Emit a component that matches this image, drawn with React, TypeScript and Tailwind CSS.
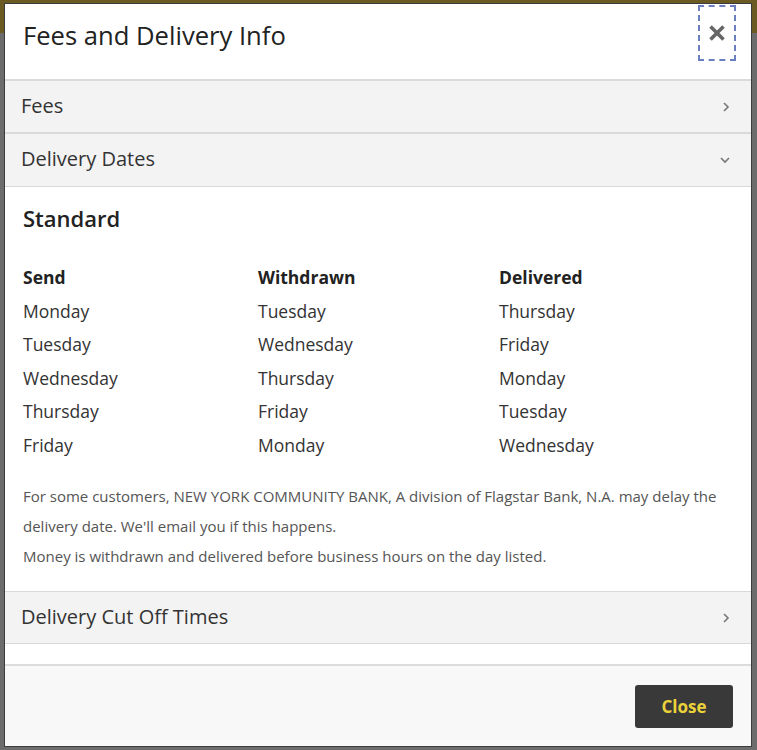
import React from 'react';

const rows = [
  ['Monday', 'Tuesday', 'Thursday'],
  ['Tuesday', 'Wednesday', 'Friday'],
  ['Wednesday', 'Thursday', 'Monday'],
  ['Thursday', 'Friday', 'Tuesday'],
  ['Friday', 'Monday', 'Wednesday'],
];

const ChevronRight = () => (
  <svg width="10" height="12" viewBox="0 0 10 12" className="text-[#777]">
    <polyline points="3,2 7,6 3,10" fill="none" stroke="currentColor" strokeWidth="1.6" />
  </svg>
);

const ChevronDown = () => (
  <svg width="12" height="10" viewBox="0 0 12 10" className="text-[#777]">
    <polyline points="2,3 6,7 10,3" fill="none" stroke="currentColor" strokeWidth="1.6" />
  </svg>
);

const AccordionHeader: React.FC<{ label: string; open?: boolean; className?: string }> = ({ label, open, className }) => (
  <div className={`flex items-center justify-between bg-[#f3f3f3] border-[#d9d9d9] pl-[16px] pr-[20px] ${className ?? ''}`}>
    <span className="mb-[2px] text-[20px] text-[#333]">{label}</span>
    {open ? <ChevronDown /> : <ChevronRight />}
  </div>
);

export default function App() {
  return (
    <div className="relative h-[750px] w-[757px] overflow-hidden bg-[#6c6c6c]" style={{ fontFamily: '"Open Sans", "Liberation Sans", sans-serif' }}>
      {/* page behind the overlay */}
      <div className="absolute left-0 right-0 top-0 h-[33px] bg-[#6b5a21]" />

      <div className="relative ml-[4px] mt-[3px] flex h-[744px] w-[748px] flex-col border border-[#3c3c3c] bg-white">
        {/* HEADER */}
        <div className="flex h-[77px] shrink-0 items-start justify-between border-b-2 border-[#dadada]">
          <h2 className="ml-[18px] mt-[14px] text-[25.6px] leading-[36px] text-[#222]">Fees and Delivery Info</h2>
          <button className="mr-[15px] mt-[1px] flex h-[56px] w-[38px] items-center justify-center border-2 border-dashed border-[#6a7fbf]">
            <svg width="18" height="18" viewBox="0 0 18 18">
              <path d="M2.5 2.5 L15.5 15.5 M15.5 2.5 L2.5 15.5" stroke="#666" strokeWidth="3.6" strokeLinecap="butt" />
            </svg>
          </button>
        </div>

        <AccordionHeader label="Fees" className="h-[53px] border-b-2" />
        <AccordionHeader label="Delivery Dates" open className="h-[53px] border-b" />

        {/* DELIVERY DATES BODY */}
        <div className="px-[18px] pt-[15px]">
          <h3 className="text-[22px] font-semibold leading-[32px] text-[#222]">Standard</h3>
          <div className="mt-[27px] grid grid-cols-[235px_241px_1fr] text-[17.5px] leading-[33.5px] text-[#333]">
            <div className="font-bold text-[#222]">Send</div>
            <div className="font-bold text-[#222]">Withdrawn</div>
            <div className="font-bold text-[#222]">Delivered</div>
            {rows.map((r, i) => (
              <React.Fragment key={i}>
                <div>{r[0]}</div>
                <div>{r[1]}</div>
                <div>{r[2]}</div>
              </React.Fragment>
            ))}
          </div>
          <div className="mt-[19px] pb-[20px] text-[15px] leading-[30px] text-[#555]">
            <p>For some customers, NEW YORK COMMUNITY BANK, A division of Flagstar Bank, N.A. may delay the delivery date. We'll email you if this happens.</p>
            <p>Money is withdrawn and delivered before business hours on the day listed.</p>
          </div>
        </div>

        <AccordionHeader label="Delivery Cut Off Times" className="h-[53px] border-y" />

        {/* FOOTER */}
        <div className="mt-auto flex h-[82px] shrink-0 items-start justify-end border-t-2 border-[#dcdcdc] bg-[#f8f8f8] pr-[18px] pt-[19px]">
          <button className="h-[43px] w-[98px] rounded-[3px] bg-[#393939] text-[17px] font-bold text-[#ecd23a]">Close</button>
        </div>
      </div>
    </div>
  );
}
